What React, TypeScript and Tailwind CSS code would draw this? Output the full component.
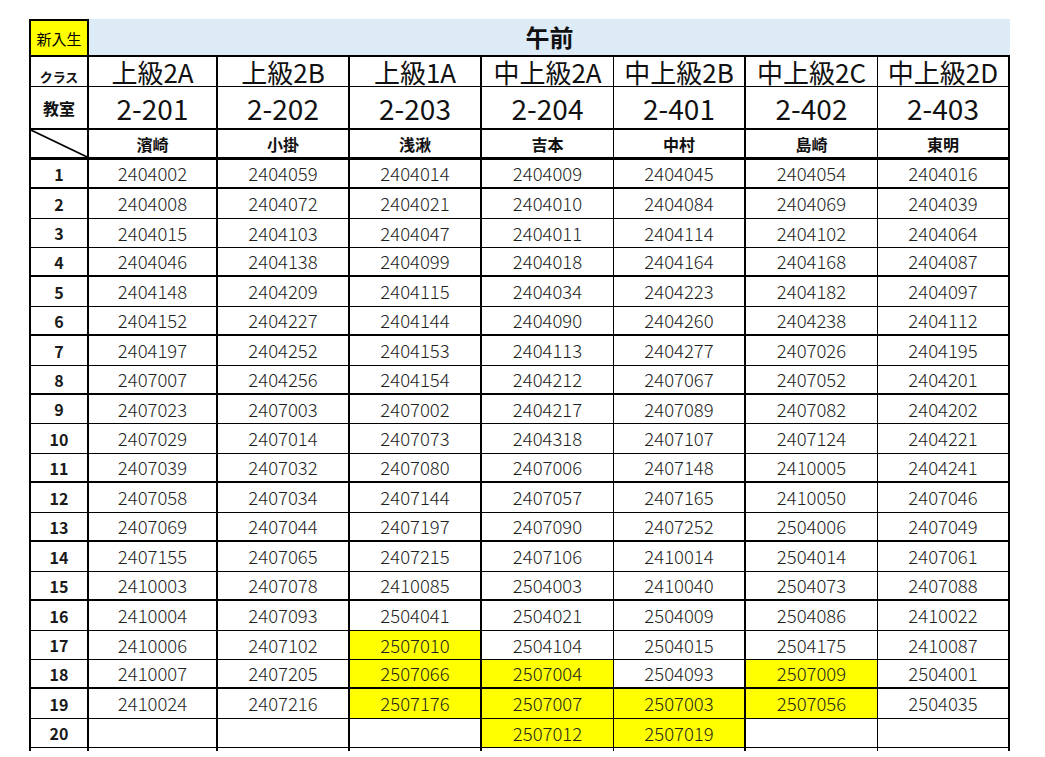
import React from "react";

const classes = ["上級2A", "上級2B", "上級1A", "中上級2A", "中上級2B", "中上級2C", "中上級2D"];
const rooms = ["2-201", "2-202", "2-203", "2-204", "2-401", "2-402", "2-403"];
const teachers = ["濱崎", "小掛", "浅湫", "吉本", "中村", "島崎", "東明"];

const data: string[][] = [
  ["2404002", "2404059", "2404014", "2404009", "2404045", "2404054", "2404016"],
  ["2404008", "2404072", "2404021", "2404010", "2404084", "2404069", "2404039"],
  ["2404015", "2404103", "2404047", "2404011", "2404114", "2404102", "2404064"],
  ["2404046", "2404138", "2404099", "2404018", "2404164", "2404168", "2404087"],
  ["2404148", "2404209", "2404115", "2404034", "2404223", "2404182", "2404097"],
  ["2404152", "2404227", "2404144", "2404090", "2404260", "2404238", "2404112"],
  ["2404197", "2404252", "2404153", "2404113", "2404277", "2407026", "2404195"],
  ["2407007", "2404256", "2404154", "2404212", "2407067", "2407052", "2404201"],
  ["2407023", "2407003", "2407002", "2404217", "2407089", "2407082", "2404202"],
  ["2407029", "2407014", "2407073", "2404318", "2407107", "2407124", "2404221"],
  ["2407039", "2407032", "2407080", "2407006", "2407148", "2410005", "2404241"],
  ["2407058", "2407034", "2407144", "2407057", "2407165", "2410050", "2407046"],
  ["2407069", "2407044", "2407197", "2407090", "2407252", "2504006", "2407049"],
  ["2407155", "2407065", "2407215", "2407106", "2410014", "2504014", "2407061"],
  ["2410003", "2407078", "2410085", "2504003", "2410040", "2504073", "2407088"],
  ["2410004", "2407093", "2504041", "2504021", "2504009", "2504086", "2410022"],
  ["2410006", "2407102", "2507010", "2504104", "2504015", "2504175", "2410087"],
  ["2410007", "2407205", "2507066", "2507004", "2504093", "2507009", "2504001"],
  ["2410024", "2407216", "2507176", "2507007", "2507003", "2507056", "2504035"],
  ["", "", "", "2507012", "2507019", "", ""],
];

const yellow = new Set<string>(["16-2", "17-2", "17-3", "17-5", "18-2", "18-3", "18-4", "18-5", "19-3", "19-4"]);

const rowH = [29, 30, 29, 29, 30, 29, 30, 29, 29, 30, 29, 30, 29, 30, 29, 30, 29, 29, 30, 29];
const rowB = [2, 1, 1, 2, 1, 2, 1, 2, 1, 1, 2, 1, 2, 1, 2, 1, 1, 2, 1, 1];

const H: Record<number, string> = { 29: "h-[29px]", 30: "h-[30px]" };
const B: Record<number, string> = { 1: "border-b", 2: "border-b-2" };
const R = ["border-r-2 border-l-2", "border-r-2", "border-r-2", "border-r-2", "border-r", "border-r-2", "border-r", "border-r-2"];

export default function App() {
  return (
    <div className="w-[1045px] h-[757px] overflow-hidden bg-white pl-[29px] pt-[19px] font-['Noto_Sans_CJK_JP','Noto_Sans',sans-serif]">
      <div className="grid grid-cols-[60px_129px_repeat(6,132px)] border-black">
        {/* band row */}
        <div className="h-[38px] border-2 border-black bg-[#ffff00] flex items-center justify-center text-[15px] text-black leading-none">
          新入生
        </div>
        <div className="col-span-7 h-[38px] bg-[#ddebf7] border-b-2 border-black flex items-center justify-center text-[24px] font-bold text-[#111] leading-none">
          午前
        </div>

        {/* class row */}
        <div className={`h-[30px] border-b border-black ${R[0]} flex items-end justify-center pb-[3px] text-[13px] font-bold text-[#111] leading-none`}>
          クラス
        </div>
        {classes.map((c, i) => (
          <div
            key={c}
            className={`h-[30px] border-b border-black ${R[i + 1]} flex items-center justify-center text-[26px] text-[#111] leading-none`}
          >
            {c}
          </div>
        ))}

        {/* room row */}
        <div className={`h-[43px] border-b-2 border-black ${R[0]} flex items-center justify-center text-[16px] font-bold text-[#111] leading-none`}>
          教室
        </div>
        {rooms.map((r, i) => (
          <div
            key={r}
            className={`h-[43px] border-b-2 border-black ${R[i + 1]} flex items-center justify-center text-[28px] text-[#111] leading-none`}
          >
            {r}
          </div>
        ))}

        {/* teacher row */}
        <div className={`relative h-[30px] border-b-[3px] border-black ${R[0]}`}>
          <svg className="absolute inset-0 w-full h-full" viewBox="0 0 56 27" preserveAspectRatio="none">
            <line x1="0" y1="0" x2="56" y2="27" stroke="black" strokeWidth="1.6" />
          </svg>
        </div>
        {teachers.map((t, i) => (
          <div
            key={t}
            className={`h-[30px] border-b-[3px] border-black ${R[i + 1]} flex items-center justify-center text-[16px] font-bold text-[#111] leading-none`}
          >
            {t}
          </div>
        ))}

        {/* data rows */}
        {data.map((row, ri) => (
          <React.Fragment key={ri}>
            <div
              className={`${H[rowH[ri]]} ${B[rowB[ri]]} border-black ${R[0]} flex items-center justify-center text-[16px] font-bold text-[#1a1a1a] leading-none`}
            >
              {ri + 1}
            </div>
            {row.map((v, ci) => (
              <div
                key={ci}
                className={`${H[rowH[ri]]} ${B[rowB[ri]]} border-black ${R[ci + 1]} ${
                  yellow.has(`${ri}-${ci}`) ? "bg-[#ffff00]" : ""
                } flex items-center justify-center text-[18.5px] font-light text-[#1f1f1f] leading-none`}
              >
                {v}
              </div>
            ))}
          </React.Fragment>
        ))}

        {/* stub of next row */}
        {R.map((r, i) => (
          <div key={`s${i}`} className={`h-[3px] border-black ${r}`} />
        ))}
      </div>
    </div>
  );
}
